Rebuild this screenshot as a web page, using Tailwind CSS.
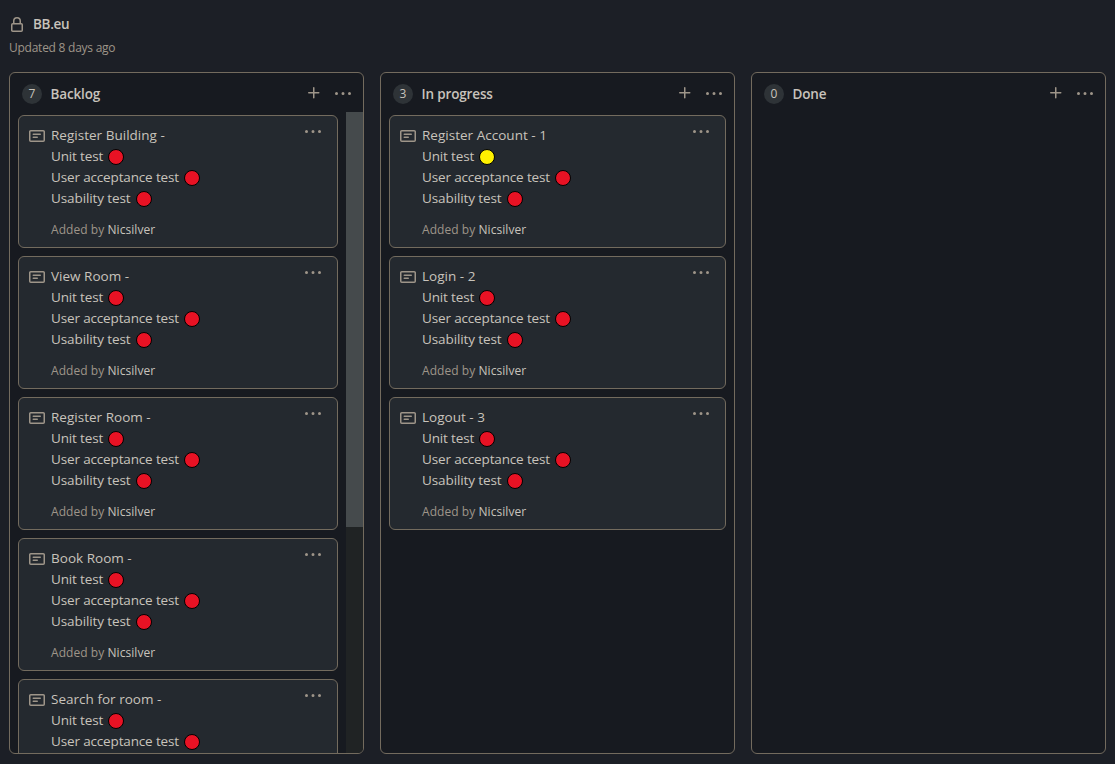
<!DOCTYPE html>
<html lang="en">
<head>
<meta charset="utf-8">
<title>BB.eu</title>
<script src="https://cdn.jsdelivr.net/npm/@tailwindcss/browser@4"></script>
</head>
<body class="h-[764px] w-[1115px] overflow-hidden bg-[#1c1f26] font-['Open_Sans','Noto_Sans',sans-serif] text-[#c8c3bc]">
<svg class="hidden">
  <symbol id="lock" viewBox="0 0 16 16"><path fill-rule="evenodd" d="M4 4v2h-.25A1.75 1.75 0 002 7.75v5.5c0 .966.784 1.75 1.75 1.75h8.5A1.75 1.75 0 0014 13.25v-5.5A1.75 1.75 0 0012.25 6H12V4a4 4 0 10-8 0zm6.5 2V4a2.5 2.5 0 10-5 0v2h5zM12 7.5h.25a.25.25 0 01.25.25v5.5a.25.25 0 01-.25.25h-8.5a.25.25 0 01-.25-.25v-5.5a.25.25 0 01.25-.25H12z"/></symbol>
  <symbol id="note" viewBox="0 0 16 16"><path fill-rule="evenodd" d="M0 3.75C0 2.784.784 2 1.75 2h12.5c.966 0 1.75.784 1.75 1.75v8.5A1.75 1.75 0 0114.25 14H1.75A1.75 1.75 0 010 12.25v-8.5zm1.75-.25a.25.25 0 00-.25.25v8.5c0 .138.112.25.25.25h12.5a.25.25 0 00.25-.25v-8.5a.25.25 0 00-.25-.25H1.75zM3.5 6.25a.75.75 0 01.75-.75h7a.75.75 0 010 1.5h-7a.75.75 0 01-.75-.75zm.75 2.25a.75.75 0 000 1.5h4a.75.75 0 000-1.5h-4z"/></symbol>
  <symbol id="plus" viewBox="0 0 16 16"><path d="M7.75 2a.75.75 0 01.75.75V7h4.25a.75.75 0 010 1.5H8.5v4.25a.75.75 0 01-1.5 0V8.5H2.75a.75.75 0 010-1.5H7V2.75A.75.75 0 017.75 2z"/></symbol>
  <symbol id="dots" viewBox="0 0 16 16"><path d="M8 9a1.5 1.5 0 100-3 1.5 1.5 0 000 3zM1.5 9a1.5 1.5 0 100-3 1.5 1.5 0 000 3zm13 0a1.5 1.5 0 100-3 1.5 1.5 0 000 3z"/></symbol>
</svg>
<header class="h-[72px] pl-[9px] pt-[14px]">
  <div class="flex h-[21px] items-center">
    <svg class="size-4 fill-[#9e9589]"><use href="#lock"/></svg>
    <h1 class="ml-2 text-[13.5px] leading-[21px] font-semibold tracking-[-0.3px]">BB.eu</h1>
  </div>
  <p class="mt-[3px] text-[12px] leading-[20px] tracking-[-0.25px] text-[#9e9589]">Updated 8 days ago</p>
</header>
<main id="board" class="flex gap-4 pl-[9px]"></main>
<script>
const red = 'bg-[#e81224]';
const dot = (c) => `<i class="ml-[5px] size-4 rounded-full border-[1.5px] border-black ${c}"></i>`;
const card = ([title, first, partial]) => `
  <article class="flex h-[133px] shrink-0 rounded-md border border-[#736b5e] bg-[#24292f] pl-[10px] pt-[9px]">
    <svg class="mt-[3px] size-4 shrink-0 fill-[#9e9589]"><use href="#note"/></svg>
    <div class="ml-[6px] grow text-[13.5px] leading-[21px] whitespace-nowrap">
      <p class="tracking-[0.02px]">${title}</p>
      <p class="flex h-[21px] items-center"><span class="tracking-[-0.15px]">Unit test</span>${dot(first)}</p>
      <p class="flex h-[21px] items-center"><span class="tracking-[-0.15px]">User acceptance test</span>${dot(red)}</p>
      ${partial ? '' : `
      <p class="flex h-[21px] items-center"><span class="tracking-[-0.1px]">Usability test</span>${dot(red)}</p>
      <p class="mt-[10px] text-[12px] tracking-[0.06px] text-[#9e9589]">Added by <span class="text-[#c8c3bc]">Nicsilver</span></p>`}
    </div>
    <svg class="mt-[-1px] mr-4 size-4 shrink-0 fill-[#9e9589]"><use href="#dots"/></svg>
  </article>`;
const columns = [
  ['7', 'Backlog', [['Register Building -', red], ['View Room -', red], ['Register Room -', red], ['Book Room -', red], ['Search for room -', red, true]], true],
  ['3', 'In progress', [['Register Account - 1', 'bg-[#fff100]'], ['Login - 2', red], ['Logout - 3', red]], false],
  ['0', 'Done', [], false],
];
document.getElementById('board').innerHTML = columns.map(([n, name, cards, scroll]) => `
<section class="flex h-[682px] w-[355px] flex-col overflow-hidden rounded-md border border-[#736b5e] bg-[#171a20]">
  <div class="flex h-[39px] shrink-0 items-center pt-[3px] pr-3 pl-3">
    <span class="flex size-5 items-center justify-center rounded-full bg-[#2e3337] text-[12px] font-medium">${n}</span>
    <h2 class="ml-[8.5px] grow text-[13.5px] font-semibold tracking-[-0.15px]">${name}</h2>
    <svg class="mt-[-2px] mr-[13px] size-4 fill-[#9e9589]"><use href="#plus"/></svg>
    <svg class="size-4 fill-[#9e9589]"><use href="#dots"/></svg>
  </div>
  <div class="flex min-h-0 grow">
    <div class="flex grow flex-col gap-2 overflow-hidden px-2 pt-[3px]">${cards.map(card).join('')}</div>
    ${scroll ? '<div class="w-[17px] shrink-0 bg-[#202324]"><div class="h-[415px] bg-[#454a4c]"></div></div>' : ''}
  </div>
</section>`).join('');
</script>
</body>
</html>
